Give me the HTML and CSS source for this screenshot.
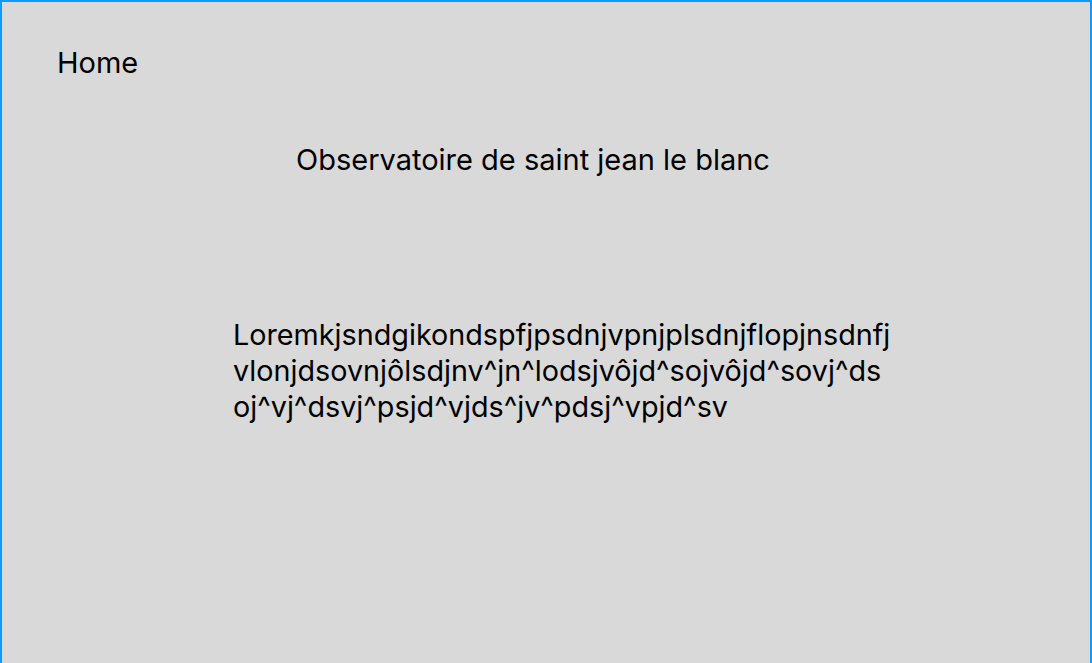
FILE: index.html
```html
<!DOCTYPE html>
<html lang="fr">
<head>
<meta charset="utf-8">
<title>Home</title>
<link rel="stylesheet" href="styles.css">
</head>
<body>
<main class="frame">
  <nav class="nav">Home</nav>
  <h1 class="title">Observatoire de saint jean le blanc</h1>
  <p class="text">Loremkjsndgikondspfjpsdnjvpnjplsdnjflopjnsdnfj<br>vlonjdsovnjôlsdjnv^jn^lodsjvôjd^sojvôjd^sovj^ds<br>oj^vj^dsvj^psjd^vjds^jv^pdsj^vpjd^sv</p>
</main>
</body>
</html>
```
FILE: styles.css
```css
html, body {
  margin: 0;
  padding: 0;
}
body {
  font-family: Inter, "Noto Sans", sans-serif;
  color: #000;
  background: #d9d9d9;
}
.frame {
  box-sizing: border-box;
  width: 1092px;
  height: 663px;
  background: #d9d9d9;
  border: 2px solid #0d99ff;
  border-bottom: none;
  padding: 43px 0 0 55px;
  display: flex;
  flex-direction: column;
  align-items: flex-start;
}
.nav, .title, .text {
  font-size: 29px;
  font-weight: 400;
  line-height: 36px;
  margin: 0;
}
.title {
  margin-top: 61px;
  margin-left: 239px;
}
.text {
  font-size: 28.75px;
  margin-top: 139px;
  margin-left: 176px;
}
```
